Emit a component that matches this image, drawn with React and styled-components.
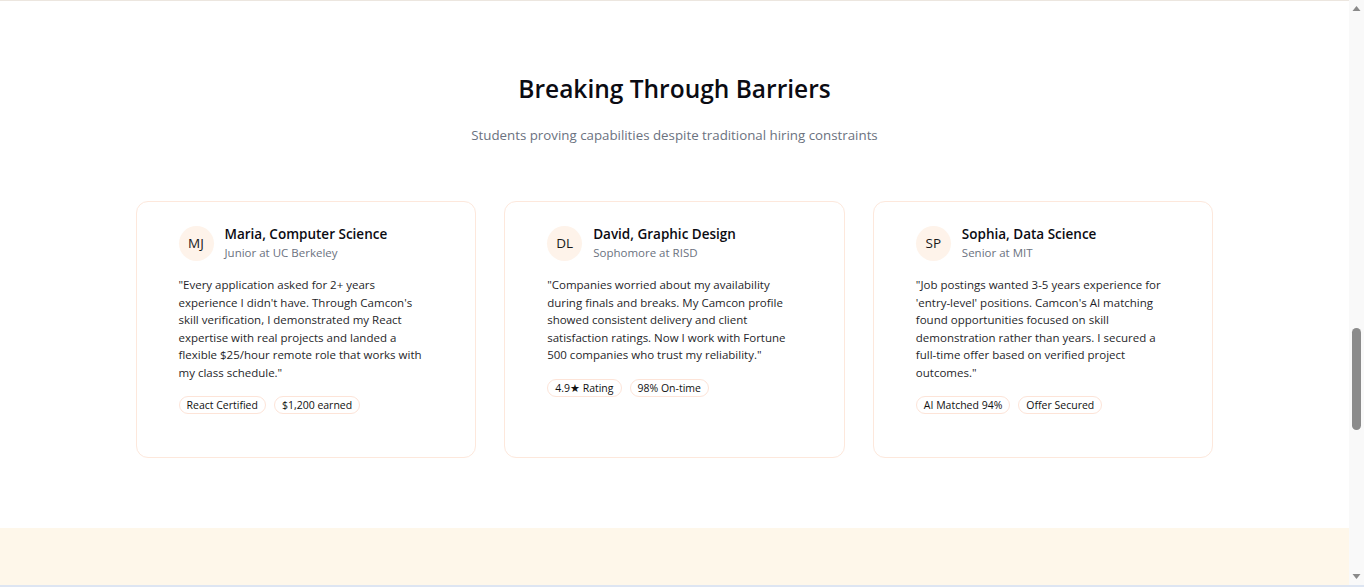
import React from "react";
import styled, { createGlobalStyle } from "styled-components";

const Global = createGlobalStyle`
  html, body { margin: 0; padding: 0; background: #ffffff; }
  body { font-family: "Open Sans", "Noto Sans", sans-serif; color: #111827; }
  * { box-sizing: border-box; }
`;

const Window = styled.div`
  height: 587px;
  display: flex;
  flex-direction: column;
  overflow: hidden;
`;

const Viewport = styled.div`
  flex: 1;
  display: flex;
  min-height: 0;
`;

const Page = styled.div`
  flex: 1;
  display: flex;
  flex-direction: column;
  border-top: 1px solid #ece6df;
`;

const Section = styled.section`
  padding: 72px 0 70px;
  background: #ffffff;
`;

const Container = styled.div`
  max-width: 1078px;
  margin: 0 auto;
`;

const Title = styled.h2`
  margin: 0;
  text-align: center;
  font-size: 24.5px;
  line-height: 31px;
  font-weight: 600;
  color: #0b0b12;
`;

const Subtitle = styled.p`
  margin: 21px 0 0;
  text-align: center;
  font-size: 13.3px;
  line-height: 20px;
  color: #6b7280;
`;

const Grid = styled.div`
  margin-top: 56px;
  display: grid;
  grid-template-columns: repeat(3, 1fr);
  gap: 28px;
`;

const Card = styled.article`
  border: 1px solid #fde8dc;
  border-radius: 12px;
  padding: 23px 42px 43px;
  background: #ffffff;
`;

const Header = styled.div`
  display: flex;
  align-items: center;
  gap: 11px;
`;

const Avatar = styled.div`
  width: 35px;
  height: 35px;
  border-radius: 50%;
  background: #fef3ea;
  display: flex;
  align-items: center;
  justify-content: center;
  font-size: 13.5px;
  color: #1a1a1a;
  flex-shrink: 0;
`;

const Who = styled.div`
  display: flex;
  flex-direction: column;
`;

const Name = styled.div`
  font-size: 13.5px;
  line-height: 19px;
  font-weight: 600;
  color: #0b0b12;
`;

const Role = styled.div`
  font-size: 11.5px;
  line-height: 17px;
  color: #6b7280;
`;

const Quote = styled.p`
  margin: 15px 0 0;
  font-size: 11.5px;
  line-height: 17.5px;
  color: #1f1f2a;
  max-width: 256px;
`;

const Tags = styled.div`
  display: flex;
  gap: 8px;
  margin-top: 15px;
`;

const Tag = styled.span`
  display: inline-flex;
  align-items: center;
  height: 18px;
  padding: 0 7px;
  border: 1px solid #fde4d8;
  border-radius: 999px;
  font-size: 10.5px;
  color: #111111;
`;

const Cream = styled.section`
  background: #fef7ea;
  flex: 1;
`;

const ScrollTrack = styled.div`
  width: 15px;
  flex-shrink: 0;
  background: #f9f9f9;
  display: flex;
  flex-direction: column;
  align-items: center;
  padding: 5px 0 5px;
`;

const ArrowIcon = styled.svg`
  display: block;
  flex-shrink: 0;
  ${(p) => (p.$down ? "margin-top: auto;" : "")}
`;

const Thumb = styled.div`
  width: 9px;
  height: 102px;
  margin-top: 316px;
  border-radius: 5px;
  background: #8b8b8b;
`;

const Edge = styled.div`
  height: 2px;
  background: #dde5f2;
`;

function Arrow({ down }) {
  return (
    <ArrowIcon $down={down} width="9" height="7" viewBox="0 0 9 7">
      {down ? (
        <path d="M0.5 1 L8.5 1 L4.5 6 Z" fill="#8a8a8a" />
      ) : (
        <path d="M0.5 6 L8.5 6 L4.5 1 Z" fill="#8a8a8a" />
      )}
    </ArrowIcon>
  );
}

const stories = [
  {
    initials: "MJ",
    name: "Maria, Computer Science",
    role: "Junior at UC Berkeley",
    quote:
      "\"Every application asked for 2+ years experience I didn't have. Through Camcon's skill verification, I demonstrated my React expertise with real projects and landed a flexible $25/hour remote role that works with my class schedule.\"",
    tags: ["React Certified", "$1,200 earned"],
  },
  {
    initials: "DL",
    name: "David, Graphic Design",
    role: "Sophomore at RISD",
    quote:
      "\"Companies worried about my availability during finals and breaks. My Camcon profile showed consistent delivery and client satisfaction ratings. Now I work with Fortune 500 companies who trust my reliability.\"",
    tags: ["4.9★ Rating", "98% On-time"],
  },
  {
    initials: "SP",
    name: "Sophia, Data Science",
    role: "Senior at MIT",
    quote:
      "\"Job postings wanted 3-5 years experience for 'entry-level' positions. Camcon's AI matching found opportunities focused on skill demonstration rather than years. I secured a full-time offer based on verified project outcomes.\"",
    tags: ["AI Matched 94%", "Offer Secured"],
  },
];

export default function App() {
  return (
    <Window>
      <Global />
      <Viewport>
        <Page>
          <Section>
            <Container>
              <Title>Breaking Through Barriers</Title>
              <Subtitle>Students proving capabilities despite traditional hiring constraints</Subtitle>
              <Grid>
                {stories.map((s) => (
                  <Card key={s.initials}>
                    <Header>
                      <Avatar>{s.initials}</Avatar>
                      <Who>
                        <Name>{s.name}</Name>
                        <Role>{s.role}</Role>
                      </Who>
                    </Header>
                    <Quote>{s.quote}</Quote>
                    <Tags>
                      {s.tags.map((t) => (
                        <Tag key={t}>{t}</Tag>
                      ))}
                    </Tags>
                  </Card>
                ))}
              </Grid>
            </Container>
          </Section>
          <Cream />
        </Page>
        <ScrollTrack>
          <Arrow />
          <Thumb />
          <Arrow down />
        </ScrollTrack>
      </Viewport>
      <Edge />
    </Window>
  );
}
